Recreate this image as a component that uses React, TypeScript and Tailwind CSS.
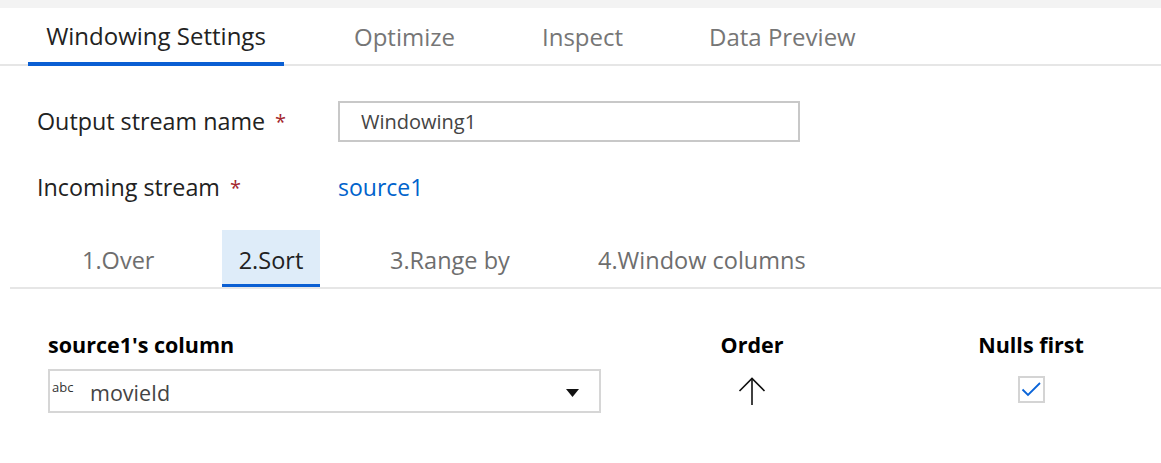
import { ReactNode } from "react";

const font = { fontFamily: '"Open Sans", "Noto Sans", sans-serif' };

function Required() {
  return <span className="ml-[10px] text-[20px] text-[#a4262c]">*</span>;
}

function SubTab({ children, active, className }: { children: ReactNode; active?: boolean; className?: string }) {
  return (
    <div
      className={
        "flex h-[57px] items-center border-b-[3px] pt-[8px] text-[23.5px] " +
        (active ? "justify-center border-[#0a5fd3] bg-[#deecf9] text-[#222]" : "border-transparent text-[#6e6e6e]") +
        " " +
        (className ?? "")
      }
    >
      {children}
    </div>
  );
}

export default function App() {
  return (
    <div className="h-[463px] w-[1161px] overflow-hidden bg-white" style={font}>
      <div className="h-[8px] bg-[#f3f3f3]" />

      {/* main tabs */}
      <div className="flex h-[58px] border-b-2 border-[#e6e6e6] pl-[28px] text-[24px]">
        <div className="-mb-[2px] flex w-[256px] items-center justify-center border-b-[4px] border-[#0a5fd3] pt-[2px] text-[#222]">
          Windowing Settings
        </div>
        <div className="flex w-[258px] items-center pl-[70px] pt-[2px] text-[#767676]">Optimize</div>
        <div className="flex w-[167px] items-center pt-[2px] text-[#767676]">Inspect</div>
        <div className="flex items-center pt-[2px] text-[#767676]">Data Preview</div>
      </div>

      {/* form */}
      <div className="pl-[37px] pt-[35px] text-[23.3px] text-[#222]">
        <div className="flex h-[41px] items-center">
          <div className="flex w-[301px] items-center">
            Output stream name
            <Required />
          </div>
          <div className="flex h-[41px] w-[462px] items-center border-2 border-[#c8c8c8] pl-[21px] text-[20px] text-[#444]">
            Windowing1
          </div>
        </div>
        <div className="mt-[25px] flex h-[41px] items-center">
          <div className="flex w-[301px] items-center">
            Incoming stream
            <Required />
          </div>
          <span className="text-[23px] text-[#0063cc]">source1</span>
        </div>
      </div>

      {/* sub tabs */}
      <div className="ml-[10px] mt-[22px] flex border-b-2 border-[#e6e6e6]">
        <SubTab className="ml-[72px] w-[140px]">1.Over</SubTab>
        <SubTab active className="w-[98px]">2.Sort</SubTab>
        <SubTab className="ml-[70px] w-[208px]">3.Range by</SubTab>
        <SubTab>4.Window columns</SubTab>
      </div>

      {/* sort table */}
      <div className="pl-[48px] pt-[42px]">
        <div className="flex h-[28px] items-center text-[21.5px] font-bold text-black">
          <div className="w-[553px]">source1&#39;s column</div>
          <div className="w-[302px] text-center">Order</div>
          <div className="w-[256px] text-center">Nulls first</div>
        </div>
        <div className="mt-[10px] flex items-center">
          <div className="relative flex h-[44px] w-[553px] items-center border-2 border-[#d6d6d6] pt-[4px]">
            <span className="absolute left-[2px] top-[7px] text-[13px] text-[#333]">abc</span>
            <span className="pl-[40px] text-[21.5px] text-[#444]">movieId</span>
            <svg className="ml-auto mr-[20px]" width="13" height="8" viewBox="0 0 13 8">
              <path d="M0 0 H13 L6.5 8 Z" fill="#111" />
            </svg>
          </div>
          <div className="flex w-[302px] justify-center">
            <svg width="28" height="28" viewBox="0 0 28 28" fill="none" stroke="#111" strokeWidth="1.6">
              <path d="M14 1 V28" />
              <path d="M1.5 14 L14 1.5 L26.5 14" />
            </svg>
          </div>
          <div className="-mt-[4px] flex w-[256px] justify-center">
            <div className="flex h-[27px] w-[27px] items-center justify-center border-2 border-[#d4d4d4]">
              <svg width="20" height="16" viewBox="0 0 20 16" fill="none" stroke="#0a64d8" strokeWidth="1.8">
                <path d="M1.5 8.5 L7 14 L19 2" />
              </svg>
            </div>
          </div>
        </div>
      </div>
    </div>
  );
}
